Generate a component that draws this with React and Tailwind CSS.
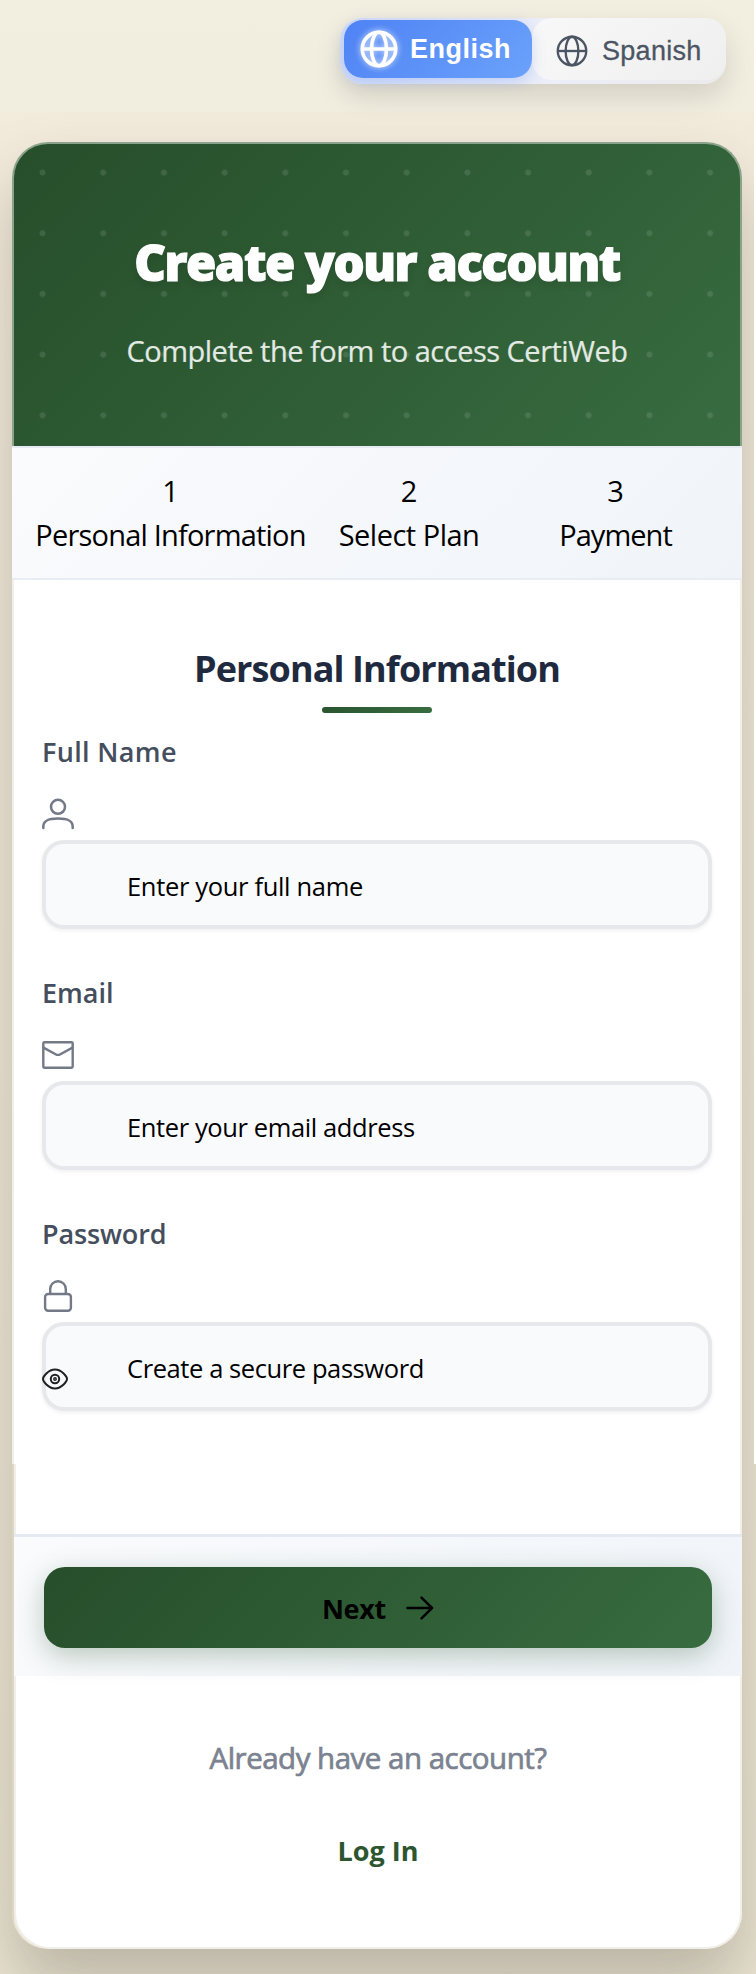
function Globe({ className, width }) {
  return (
    <svg viewBox="0 0 32 32" fill="none" stroke="currentColor" strokeWidth={width} className={className}>
      <circle cx="16" cy="16" r="13.4" />
      <ellipse cx="16" cy="16" rx="6" ry="13.4" />
      <path d="M2.6 16h26.8" />
    </svg>
  );
}

function UserIcon() {
  return (
    <svg viewBox="0 0 32 32" fill="none" stroke="currentColor" strokeWidth="2.5" strokeLinecap="round" className="size-8">
      <circle cx="16" cy="8.8" r="7" />
      <path d="M1.3 30v-1.3C1.3 22 7 20.4 16 20.4s14.7 1.6 14.7 8.3V30" />
    </svg>
  );
}

function MailIcon() {
  return (
    <svg viewBox="0 0 32 32" fill="none" stroke="currentColor" strokeWidth="2.4" strokeLinejoin="round" strokeLinecap="round" className="size-8">
      <rect x="1.3" y="3.3" width="29.4" height="25.4" rx="1.2" />
      <path d="M1.5 8.6 13.6 15.2q2.4 1.4 4.8 0L30.5 8.6" />
    </svg>
  );
}

function LockIcon() {
  return (
    <svg viewBox="0 0 32 32" fill="none" stroke="currentColor" strokeWidth="2.4" strokeLinejoin="round" className="size-8">
      <rect x="3.1" y="14" width="25.8" height="16.8" rx="3" />
      <path d="M8.2 14V9a7.8 7.8 0 0 1 15.6 0v5" />
    </svg>
  );
}

function EyeIcon() {
  return (
    <svg viewBox="0 0 26 22" fill="none" stroke="currentColor" strokeWidth="2" className="h-[22px] w-[26px]">
      <path d="M1 11C1 9 6 1.6 13 1.6S25 9 25 11s-5 9.4-12 9.4S1 13 1 11Z" />
      <circle cx="13" cy="11" r="4.2" />
      <circle cx="13" cy="11" r="1.2" strokeWidth="1.4" />
    </svg>
  );
}

function ArrowIcon() {
  return (
    <svg viewBox="0 0 28 24" fill="none" stroke="currentColor" strokeWidth="2.5" strokeLinecap="round" strokeLinejoin="round" className="h-6 w-7">
      <path d="M1.5 12h24.5M15.5 1.6 26 12 15.5 22.4" />
    </svg>
  );
}

function Field({ label, labelClass, icon, placeholder, inputClass, children }) {
  return (
    <div className="flex h-[241px] flex-col">
      <label className={"mt-px h-10 text-[27px] leading-10 font-semibold text-[#454e5d] " + labelClass}>{label}</label>
      <span className="mt-[26px] text-[#737986]">{icon}</span>
      <div className="relative mt-[10px] h-[89px]">
        <input
          placeholder={placeholder}
          className={"h-full w-full rounded-[22px] border-4 border-[#e6e8ec] bg-[#f9fafc] pt-[2px] pl-[81px] text-[25.5px] text-black shadow-[0_2px_4px_rgba(0,0,0,0.06)] outline-none placeholder:text-black " + inputClass}
        />
        {children}
      </div>
    </div>
  );
}

export default function App() {
  return (
    <div className="relative h-[1974px] w-[756px] overflow-hidden bg-linear-to-b from-[#f3ebdc] to-[#ebe4d2] font-['Open_Sans',sans-serif]">
      <header className="flex h-28 justify-end bg-linear-to-b from-[#f3efe0] to-[#f1eddf] pt-[18px] pr-[30px]">
        <div className="flex h-[66px] w-[386px] rounded-[22px] bg-linear-to-r from-[#d3ddf6] via-[#eceef8] via-55% to-[#ebebeb] pt-0.5 pl-1 font-['Liberation_Sans',sans-serif] shadow-[0_12px_28px_rgba(0,0,0,0.13)]">
          <button className="relative z-10 flex h-[58px] w-[188px] items-center rounded-[19px] bg-linear-135 from-[#4f82f4] to-[#6ba2fb] pl-[15px] text-white shadow-[0_4px_14px_rgba(80,130,246,0.25)]">
            <Globe width="2.9" className="size-10 drop-shadow-[0_0_3px_rgba(255,255,255,0.75)]" />
            <span className="ml-[11px] text-[27px] leading-[58px] font-bold tracking-[0.5px]">English</span>
          </button>
          <button className="-mt-0.5 flex h-[62px] flex-1 items-center rounded-[20px] bg-linear-135 from-[#f8f8f8] to-[#efefef] pl-[23px] text-[#4b5563]">
            <Globe width="2.2" className="mt-1 size-[34px]" />
            <span className="mt-1 ml-[13px] text-[27px] tracking-[0.3px] [-webkit-text-stroke:0.3px_#4b5563]">Spanish</span>
          </button>
        </div>
      </header>

      <div className="mt-[30px] ml-3 flex h-[1807px] w-[730px] flex-col rounded-[36px] shadow-[0_36px_64px_rgba(60,55,45,0.27)]">
        <section className="flex h-[304px] shrink-0 flex-col items-center rounded-t-[36px] border-2 border-b-0 border-[#8aa38b] bg-linear-135 from-[#264e2a] to-[#386c40] bg-origin-border text-center">
          <div className="flex h-full w-full flex-col items-center bg-[radial-gradient(circle,rgba(255,255,255,0.11)_2.6px,transparent_3.4px)] bg-size-[60.7px_60.7px] bg-position-[-1.8px_-1.8px]">
            <h1 className="mt-[88px] text-[49px] leading-[60px] font-extrabold tracking-[-1.47px] text-white [-webkit-text-stroke:1.2px_#fff] [text-shadow:0_4px_8px_rgba(0,0,0,0.12)]">Create your account</h1>
            <p className="mt-[39px] text-[29px] leading-10 tracking-[-0.5px] text-[#e3eae4] [-webkit-text-stroke:0.2px_#e3eae4]">Complete the form to access CertiWeb</p>
          </div>
        </section>

        <nav className="flex h-[134px] shrink-0 border-y-2 border-y-[#e8edf3] border-t-[#e8ebf3] bg-linear-135 from-[#fafbfd] to-[#f0f4f9] pt-[21px] text-center text-[29px] leading-[44px] text-black">
          <div className="w-[317px]"><p>1</p><p className="tracking-[-0.8px]">Personal Information</p></div>
          <div className="w-[160px]"><p>2</p><p className="tracking-[-0.5px]">Select Plan</p></div>
          <div className="w-[253px]"><p>3</p><p className="tracking-[-0.95px]">Payment</p></div>
        </nav>

        <main className="h-[884px] shrink-0 border-x-2 border-[#f1efea] bg-white px-7 pt-16">
          <h2 className="text-center text-[36px] leading-[50px] font-bold tracking-[-0.9px] text-[#1f2a3f]">Personal Information</h2>
          <div className="mx-auto mt-[13px] mb-[18px] h-1.5 w-[110px] rounded-[3px] bg-linear-to-r from-[#2a552f] to-[#386c40]" />
          <Field label="Full Name" labelClass="tracking-[0.35px]" icon={<UserIcon />} placeholder="Enter your full name" inputClass="tracking-[-0.33px]" />
          <Field label="Email" labelClass="tracking-[0px]" icon={<MailIcon />} placeholder="Enter your email address" inputClass="tracking-[-0.39px]" />
          <Field label="Password" labelClass="tracking-[-0.15px]" icon={<LockIcon />} placeholder="Create a secure password" inputClass="tracking-[-0.41px]">
            <button className="absolute top-[46px] left-0 text-[#1f1f1f]"><EyeIcon /></button>
          </Field>
        </main>

        <div className="h-[485px] shrink-0 rounded-b-[36px] bg-linear-to-r from-[#dcd6c5] from-[2px] to-transparent to-[2px] pl-0.5">
          <div className="flex h-full flex-col items-center rounded-b-[36px] border-x-2 border-b-2 border-[#f1efea] bg-white pt-[70px]">
            <div className="h-[142px] w-[728px] shrink-0 border-t-[3px] border-[#e5eaf2] bg-linear-135 from-[#fafbfd] to-[#f0f4f9] px-[30px] pt-[30px]">
              <button className="flex h-[81px] w-full items-center justify-center rounded-[21px] bg-linear-135 from-[#264e2a] to-[#386c40] text-black shadow-[0_8px_28px_rgba(44,85,48,0.3)]">
                <span className="pt-1 text-[27px] font-bold tracking-[-0.3px]">Next</span>
                <span className="ml-5"><ArrowIcon /></span>
              </button>
            </div>
            <p className="mt-[60px] text-[29.5px] leading-[44px] tracking-[-0.5px] text-[#7b8290] [-webkit-text-stroke:0.7px_#7b8290]">Already have an account?</p>
            <a className="mt-[51px] text-[27px] leading-10 font-bold text-[#2c5530]">Log In</a>
          </div>
        </div>
      </div>

      <div className="absolute top-0 right-0 h-[1464px] w-0.5 bg-white" />
    </div>
  );
}
